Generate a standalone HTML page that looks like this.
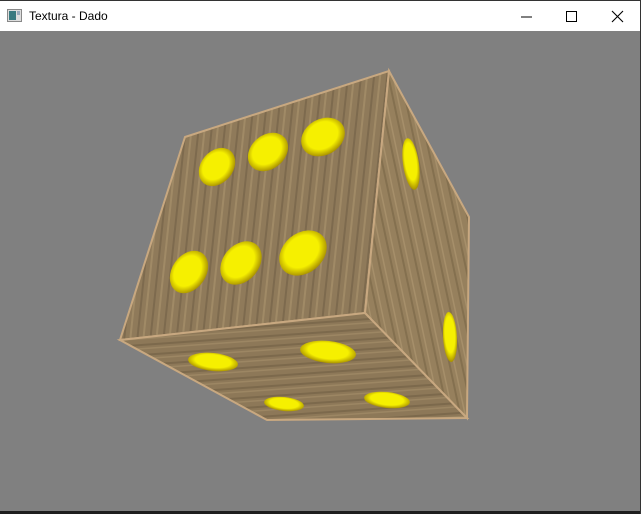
<!DOCTYPE html>
<html><head><style>
html,body{margin:0;padding:0;width:641px;height:514px;overflow:hidden;background:#808080;font-family:"Liberation Sans",sans-serif}
.tb{position:absolute;left:0;top:0;width:641px;height:31px;background:#fff;border-top:1px solid #333;box-sizing:border-box}
.tt{position:absolute;left:29px;top:8px;font-size:12px;color:#000}
.bot{position:absolute;left:0;top:511px;width:641px;height:3px;background:#1e1e1e}
.rb{position:absolute;left:640px;top:0;width:1px;height:514px;background:#333}
</style></head><body>
<div class="tb">
<svg style="position:absolute;left:7px;top:8px" width="16" height="14"><rect x="0.5" y="0.5" width="14" height="12" fill="#ddd" stroke="#888"/><rect x="2" y="2" width="7" height="9" fill="#3a7a80"/><rect x="10" y="2" width="3" height="4" fill="#9ab"/></svg>
<div class="tt">Textura - Dado</div>
<svg style="position:absolute;left:520px;top:8px" width="110" height="16">
<line x1="1" y1="8" x2="12" y2="8" stroke="#000" stroke-width="1"/>
<rect x="46.5" y="2.5" width="10" height="10" fill="none" stroke="#000"/>
<path d="M92 2 L103 13 M103 2 L92 13" stroke="#000" stroke-width="1.1"/>
</svg>
</div>
<svg style="position:absolute;left:0;top:0" width="641" height="514">
<defs>
<pattern id="w1" width="13" height="40" patternUnits="userSpaceOnUse" patternTransform="rotate(6)">
<rect width="13" height="40" fill="#8f7a5a"/><rect x="2" width="2" height="40" fill="#7d6a4e"/><rect x="8" width="2" height="40" fill="#a08a66"/></pattern>
<pattern id="w2" width="12" height="40" patternUnits="userSpaceOnUse" patternTransform="rotate(-12)">
<rect width="12" height="40" fill="#96805d"/><rect x="3" width="2" height="40" fill="#84704f"/><rect x="8" width="1.5" height="40" fill="#a68f6a"/></pattern>
<pattern id="w3" width="40" height="10" patternUnits="userSpaceOnUse" patternTransform="rotate(-4)">
<rect width="40" height="10" fill="#8d7858"/><rect y="3" width="40" height="2" fill="#7c694c"/><rect y="7" width="40" height="1.5" fill="#9c8663"/></pattern>
<radialGradient id="y" cx="50%" cy="45%" r="55%"><stop offset="0.65" stop-color="#f6f000"/><stop offset="1" stop-color="#a89000"/></radialGradient>
</defs>
<polygon points="185,137 389,71 365,313 120,340" fill="url(#w1)" stroke="#c8a880" stroke-width="2"/>
<polygon points="389,71 469,217 467,418 365,313" fill="url(#w2)" stroke="#c8a880" stroke-width="2"/>
<polygon points="120,340 365,313 467,418 267,420" fill="url(#w3)" stroke="#c8a880" stroke-width="2"/>
<g fill="url(#y)">
<ellipse cx="217" cy="167" rx="21" ry="16" transform="rotate(-50 217 167)"/>
<ellipse cx="268" cy="152" rx="22" ry="17" transform="rotate(-40 268 152)"/>
<ellipse cx="323" cy="137" rx="23" ry="18" transform="rotate(-30 323 137)"/>
<ellipse cx="189" cy="272" rx="23" ry="17" transform="rotate(-55 189 272)"/>
<ellipse cx="241" cy="263" rx="24" ry="18" transform="rotate(-50 241 263)"/>
<ellipse cx="303" cy="253" rx="26" ry="20" transform="rotate(-40 303 253)"/>
<ellipse cx="411" cy="164" rx="8" ry="26" transform="rotate(-8 411 164)"/>
<ellipse cx="450" cy="337" rx="7" ry="25" transform="rotate(-3 450 337)"/>
<ellipse cx="213" cy="362" rx="25" ry="9" transform="rotate(6 213 362)"/>
<ellipse cx="328" cy="352" rx="28" ry="11" transform="rotate(6 328 352)"/>
<ellipse cx="284" cy="404" rx="20" ry="7" transform="rotate(6 284 404)"/>
<ellipse cx="387" cy="400" rx="23" ry="8" transform="rotate(6 387 400)"/>
</g>
</svg>
<div class="bot"></div>
<div class="rb"></div>
</body></html>
